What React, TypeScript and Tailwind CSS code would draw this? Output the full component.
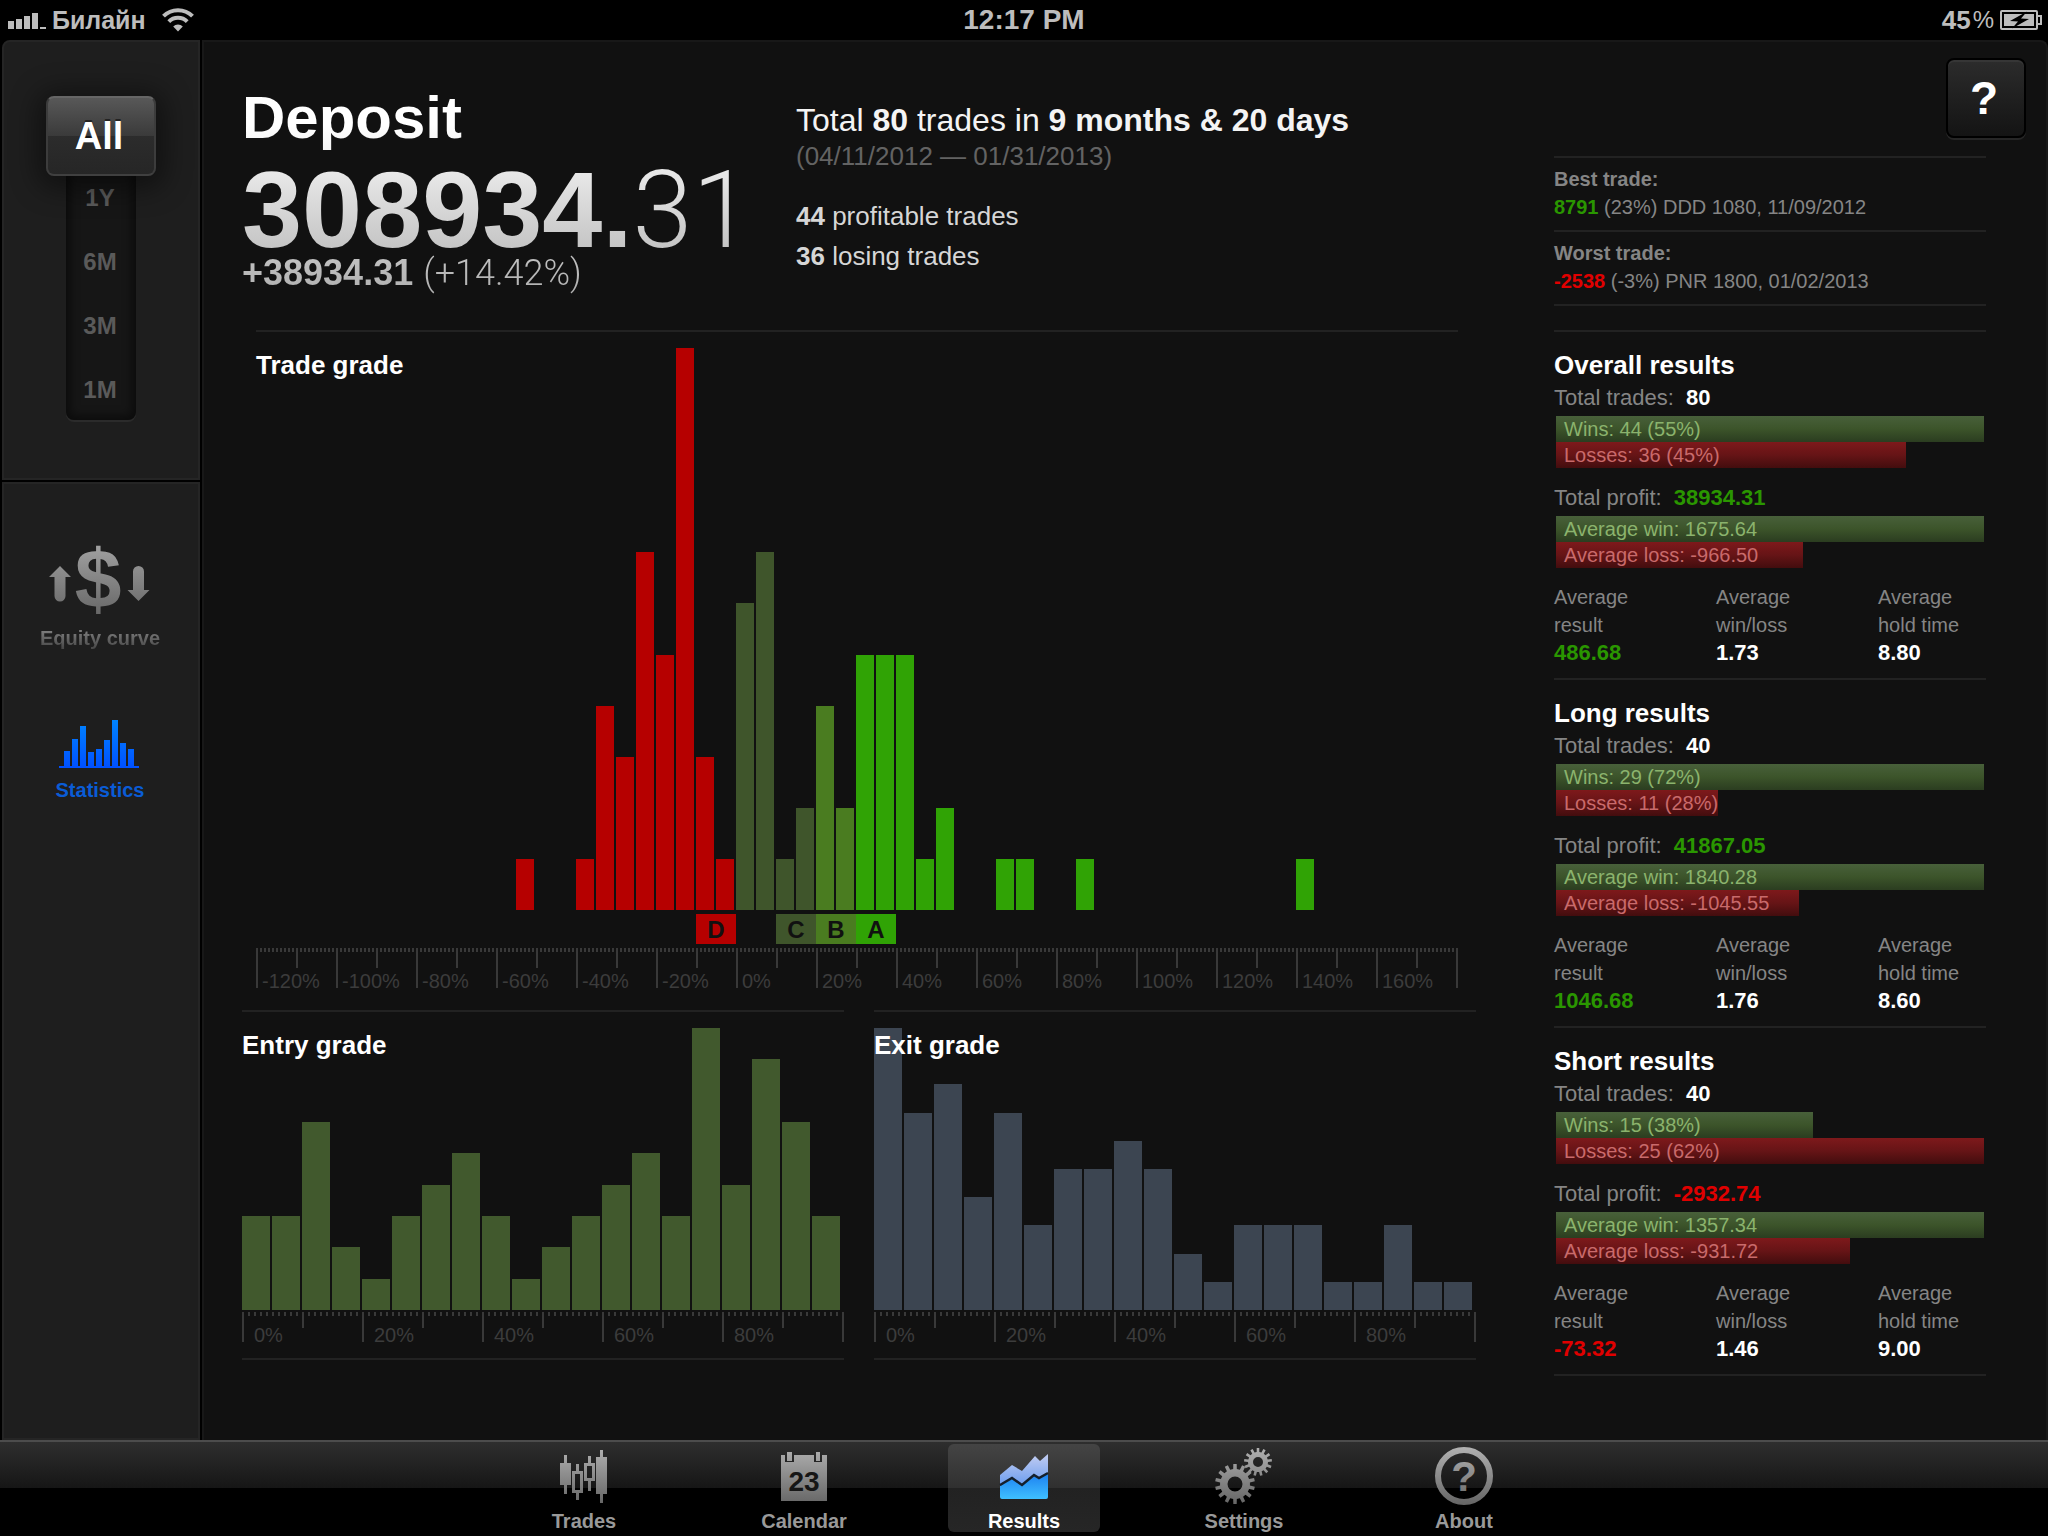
import React from "react";

type Grade = "D" | "C" | "B" | "A";

const TRADE_BINS = [
  0, 0, 0, 0, 0, 0, 0, 0, 0, 0, 0, 0, 0, 1, 0, 0, 1, 4, 3, 7, 5, 11, 3, 1, 6, 7, 1, 2, 4, 2, 5, 5, 5, 1, 2, 0, 0, 1,
  1, 0, 0, 1, 0, 0, 0, 0, 0, 0, 0, 0, 0, 0, 1, 0, 0, 0, 0, 0, 0, 0,
];
const TRADE_LABELS = [
  "-120%", "-100%", "-80%", "-60%", "-40%", "-20%", "0%", "20%", "40%", "60%", "80%", "100%", "120%", "140%", "160%",
];
const ENTRY_BINS = [3, 3, 6, 2, 1, 3, 4, 5, 3, 1, 2, 3, 4, 5, 3, 9, 4, 8, 6, 3];
const EXIT_BINS = [10, 7, 8, 4, 7, 3, 5, 5, 6, 5, 2, 1, 3, 3, 3, 1, 1, 3, 1, 1];
const SHORT_LABELS = ["0%", "20%", "40%", "60%", "80%"];

const GRADE_COLOR: Record<Grade, string> = {
  D: "bg-[#b60000]",
  C: "bg-[#3f552b]",
  B: "bg-[#4a7c20]",
  A: "bg-[#30a305]",
};

function tradeColor(bin: number): string {
  if (bin < 24) return GRADE_COLOR.D;
  if (bin < 28) return GRADE_COLOR.C;
  if (bin < 30) return GRADE_COLOR.B;
  return GRADE_COLOR.A;
}

const GRADES: { grade: Grade; place: string }[] = [
  { grade: "D", place: "col-start-23" },
  { grade: "C", place: "col-start-27" },
  { grade: "B", place: "col-start-29" },
  { grade: "A", place: "col-start-31" },
];

function Bars({ bins, color, height }: { bins: number[]; color: (i: number) => string; height: string }) {
  const max = Math.max(...bins);
  return (
    <div className={`flex items-end pr-[2px] ${height}`}>
      {bins.map((n, i) => (
        <div key={i} className="flex h-full flex-1 items-end pr-[2px]">
          <div className={`w-full ${color(i)}`} style={{ height: `${(n / max) * 100}%` }} />
        </div>
      ))}
    </div>
  );
}

function Axis({ labels, large }: { labels: string[]; large?: boolean }) {
  const height = large ? "h-10" : "h-[30px]";
  return (
    <div className="flex text-[20px] leading-5 text-[#3c3c3c]">
      {labels.map((l) => (
        <div
          key={l}
          className={`min-w-0 flex-1 border-l-2 border-[#393939] bg-[linear-gradient(90deg,#393939_2px,transparent_2px)] bg-[length:5%_4px] bg-repeat-x bg-origin-border ${height}`}
        >
          <div className={`mx-auto w-[2px] bg-[#393939] ${large ? "h-5" : "h-4"}`} />
          <div className={large ? "mt-[3px] pl-1" : "-mt-[3px] pl-[10px]"}>{l}</div>
        </div>
      ))}
      <div className={`w-[2px] bg-[#393939] ${height}`} />
    </div>
  );
}

function ChartTitle({ children }: { children: string }) {
  return <h2 className="absolute top-[18px] left-0 text-[26px] leading-[30px] font-bold text-white">{children}</h2>;
}

function SmallChart({ title, bins, color }: { title: string; bins: number[]; color: string }) {
  return (
    <section className="border-y-2 border-[#222] pb-4">
      <div className="relative pt-4">
        <Bars bins={bins} color={() => color} height="h-[282px]" />
        <ChartTitle>{title}</ChartTitle>
      </div>
      <div className="mt-[2px]">
        <Axis labels={SHORT_LABELS} />
      </div>
    </section>
  );
}

type Side = "win" | "loss";

function Meter({ side, text, value, max }: { side: Side; text: string; value: number; max: number }) {
  const look =
    side === "win"
      ? "bg-linear-to-b from-[#48603a] via-[#3c542a] to-[#2b3d20] text-[#8bb36d]"
      : "bg-linear-to-b from-[#7e191b] via-[#661416] to-[#430d0e] text-[#c96a6b]";
  return (
    <div
      className={`h-[26px] pl-2 text-[20px] leading-[26px] whitespace-nowrap ${look}`}
      style={{ width: `${(value / max) * 100}%` }}
    >
      {text}
    </div>
  );
}

interface ResultData {
  title: string;
  trades: number;
  wins: number;
  winsPct: string;
  losses: number;
  lossesPct: string;
  profit: string;
  avgWin: string;
  avgLoss: string;
  avgResult: string;
  ratio: string;
  hold: string;
}

const RESULTS: ResultData[] = [
  {
    title: "Overall results", trades: 80, wins: 44, winsPct: "55%", losses: 36, lossesPct: "45%", profit: "38934.31",
    avgWin: "1675.64", avgLoss: "966.50", avgResult: "486.68", ratio: "1.73", hold: "8.80",
  },
  {
    title: "Long results", trades: 40, wins: 29, winsPct: "72%", losses: 11, lossesPct: "28%", profit: "41867.05",
    avgWin: "1840.28", avgLoss: "1045.55", avgResult: "1046.68", ratio: "1.76", hold: "8.60",
  },
  {
    title: "Short results", trades: 40, wins: 15, winsPct: "38%", losses: 25, lossesPct: "62%", profit: "-2932.74",
    avgWin: "1357.34", avgLoss: "931.72", avgResult: "-73.32", ratio: "1.46", hold: "9.00",
  },
];

const signColor = (v: string) => (v.startsWith("-") ? "text-[#e00000]" : "text-[#2a9600]");

function Average({ label, value, color }: { label: string; value: string; color: string }) {
  return (
    <div>
      <div className="text-[20px] leading-7">
        Average
        <br />
        {label}
      </div>
      <div className={`text-[22px] leading-7 font-bold ${color}`}>{value}</div>
    </div>
  );
}

function Results({ r }: { r: ResultData }) {
  const max = Math.max(r.wins, r.losses);
  const maxAvg = Math.max(Number(r.avgWin), Number(r.avgLoss));
  return (
    <section className="border-t-2 border-[#222] pt-[18px] pb-[11px] text-[#858585] last:border-b-2">
      <h2 className="text-[26px] leading-[30px] font-bold text-white">{r.title}</h2>
      <p className="text-[22px] leading-9">
        Total trades: <b className="ml-[6px] text-white">{r.trades}</b>
      </p>
      <div className="mx-[2px]">
        <Meter side="win" text={`Wins: ${r.wins} (${r.winsPct})`} value={r.wins} max={max} />
        <Meter side="loss" text={`Losses: ${r.losses} (${r.lossesPct})`} value={r.losses} max={max} />
      </div>
      <p className="mt-3 text-[22px] leading-9">
        Total profit: <b className={`ml-[6px] ${signColor(r.profit)}`}>{r.profit}</b>
      </p>
      <div className="mx-[2px]">
        <Meter side="win" text={`Average win: ${r.avgWin}`} value={Number(r.avgWin)} max={maxAvg} />
        <Meter side="loss" text={`Average loss: -${r.avgLoss}`} value={Number(r.avgLoss)} max={maxAvg} />
      </div>
      <div className="mt-[15px] grid grid-cols-[3fr_3fr_2fr]">
        <Average label="result" value={r.avgResult} color={signColor(r.avgResult)} />
        <Average label="win/loss" value={r.ratio} color="text-white" />
        <Average label="hold time" value={r.hold} color="text-white" />
      </div>
    </section>
  );
}

function TradeNote({ label, amount, rest }: { label: string; amount: string; rest: string }) {
  return (
    <div className="border-t-2 border-[#222] pt-[7px] pb-[9px] text-[20px] leading-7 text-[#858585] last:border-b-2">
      <div className="font-bold">{label}</div>
      <div>
        <b className={signColor(amount)}>{amount}</b> {rest}
      </div>
    </div>
  );
}

function StatusBar() {
  return (
    <header className="grid h-10 grid-cols-3 items-center bg-black px-[6px] text-[26px] leading-8 font-bold text-[#bdbdbd]">
      <div className="flex items-center">
        <svg className="ml-[2px]" width="38" height="18" fill="#bdbdbd" aria-hidden="true">
          <rect x="0" y="10" width="6" height="8" />
          <rect x="8" y="8" width="6" height="10" />
          <rect x="16" y="5" width="6" height="13" />
          <rect x="24" y="2" width="6" height="16" />
          <rect x="32" y="16" width="6" height="2" />
        </svg>
        <span className="ml-[6px] text-[25px]">Билайн</span>
        <svg className="ml-4" width="32" height="24" viewBox="0 0 32 24" fill="none" stroke="#bdbdbd" aria-hidden="true">
          <path d="M1.5 8.2 A20.5 20.5 0 0 1 30.5 8.2" strokeWidth="4" />
          <path d="M6.8 13.6 A13 13 0 0 1 25.2 13.6" strokeWidth="4" />
          <path d="M16 23.5 L11.2 18.6 A6.8 6.8 0 0 1 20.8 18.6 Z" fill="#bdbdbd" stroke="none" />
        </svg>
      </div>
      <div className="text-center text-[28px]">12:17 PM</div>
      <div className="flex items-center justify-end">
        <span>45</span>
        <span className="ml-[2px] text-[24px] font-normal">%</span>
        <svg className="ml-[6px]" width="42" height="20" viewBox="0 0 42 20" aria-hidden="true">
          <rect x="1" y="1" width="36" height="18" rx="1" fill="none" stroke="#bdbdbd" strokeWidth="2" />
          <rect x="4" y="4" width="30" height="12" fill="#bdbdbd" />
          <path d="M38 6 h3 v8 h-3" fill="none" stroke="#bdbdbd" strokeWidth="2" />
          <path d="M27 1.5 L10 11 L18 11.5 L12 18.5 L29 9 L21 8.5 Z" fill="#000" />
        </svg>
      </div>
    </header>
  );
}

function Sidebar() {
  return (
    <aside className="flex w-[202px] shrink-0 flex-col gap-[2px] bg-black px-[2px]">
      <div className="flex flex-col items-center rounded-tl-lg border-2 border-[#252525] bg-[#1e1e1e] pt-[54px] pb-[58px] font-bold">
        <button
          type="button"
          aria-pressed="true"
          className="relative z-10 h-20 w-[110px] rounded-lg border-2 border-t-[#666] border-r-[#3c3c3c] border-b-[#404040] border-l-[#3c3c3c] bg-[linear-gradient(#585858,#3a3a3a_50%,#2c2c2c_50%,#262626)] pr-1 text-[38px] leading-10 text-white shadow-[0_4px_28px_8px_rgba(0,0,0,0.45)] [text-shadow:0_-2px_0_rgba(0,0,0,0.5)]"
        >
          All
        </button>
        <div className="-mt-2 flex w-[70px] flex-col gap-4 rounded-b-lg bg-[#161616] pt-[6px] pr-[2px] pb-[6px] text-[24px] text-[#5a5a5a] shadow-[inset_0_0_10px_4px_rgba(0,0,0,0.5),0_2px_0_#2b2b2b]">
          {["1Y", "6M", "3M", "1M"].map((p) => (
            <button key={p} type="button" className="h-12">
              {p}
            </button>
          ))}
        </div>
      </div>
      <nav className="flex flex-1 flex-col items-center gap-[70px] border-2 border-[#252525] bg-[#1e1e1e] pt-[60px] pr-[2px] text-[20px] leading-6 font-bold">
        <button type="button" className="flex flex-col items-center gap-[10px]">
          <svg className="overflow-visible" width="104" height="72" viewBox="0 0 104 72" aria-hidden="true">
            <defs>
              <linearGradient id="equity" gradientUnits="userSpaceOnUse" x1="0" y1="0" x2="0" y2="72">
                <stop offset="0" stopColor="#a2a2a2" />
                <stop offset="1" stopColor="#666" />
              </linearGradient>
            </defs>
            <g fill="url(#equity)">
              <path d="M12 22 L23 33 H17.500 V52 a5.500 5.500 0 0 1 -11 0 V33 H1 Z" />
              <path d="M90.500 57 L79.500 46 H85 V27.500 a5.500 5.500 0 0 1 11 0 V46 H101.500 Z" />
              <text x="50" y="64" textAnchor="middle" fontSize="84" fontWeight="700">
                $
              </text>
            </g>
          </svg>
          <span className="bg-linear-to-b from-[#8c8c8c] to-[#444] bg-clip-text text-transparent">Equity curve</span>
        </button>
        <button type="button" aria-current="page" className="flex flex-col items-center gap-[10px]">
          <svg className="overflow-visible" width="80" height="48" viewBox="1 0 80 48" aria-hidden="true">
            <defs>
              <linearGradient id="stats" gradientUnits="userSpaceOnUse" x1="0" y1="0" x2="0" y2="48">
                <stop offset="0" stopColor="#0084ff" />
                <stop offset="1" stopColor="#0050ff" />
              </linearGradient>
            </defs>
            <g fill="url(#stats)">
              {[31, 19, 6, 32, 29, 20, 0, 23, 29].map((y, i) => (
                <rect key={i} x={5 + i * 8} y={y} width="6" height={46 - y} />
              ))}
              <rect x="0" y="46" width="80" height="2" />
            </g>
          </svg>
          <span className="text-[#0a5cd6]">Statistics</span>
        </button>
      </nav>
    </aside>
  );
}

function gearPath(cx: number, cy: number, outer: number, inner: number, hole: number, teeth: number): string {
  const pts: string[] = [];
  const step = (Math.PI * 2) / teeth;
  for (let i = 0; i < teeth; i++) {
    const a = i * step - Math.PI / 2;
    const corners: [number, number][] = [
      [inner, -0.27],
      [outer, -0.19],
      [outer, 0.19],
      [inner, 0.27],
    ];
    for (const [r, o] of corners) {
      pts.push(`${(cx + r * Math.cos(a + o * step)).toFixed(2)} ${(cy + r * Math.sin(a + o * step)).toFixed(2)}`);
    }
  }
  return `M${pts.join("L")}Z M${cx - hole} ${cy}a${hole} ${hole} 0 1 0 ${hole * 2} 0a${hole} ${hole} 0 1 0 ${-hole * 2} 0Z`;
}

const TABS: { name: string; icon: React.ReactNode; active?: boolean }[] = [
  {
    name: "Trades",
    icon: (
      <>
        <path d="M12 11h3v8h4v22h-4v9h-3v-9H8V19h4z" />
        <path fillRule="evenodd" d="M24 20h3v7h4v22h-4v7h-3v-7h-4V27h4zM23 30v16h5V30z" />
        <path fillRule="evenodd" d="M36 12h3v7h4v18h-4v10h-3V37h-4V19h4zM35 22v12h5V22z" />
        <path d="M48 6h3v7h4v37h-4v9h-3v-9h-4V13h4z" />
      </>
    ),
  },
  {
    name: "Calendar",
    icon: (
      <>
        <path d="M9 11h4v7h9v-7h20v7h8v-7h5v46H9z" />
        <path d="M15 8h5v9h-5zM44 8h4v9h-4z" />
        <text x="32" y="47" textAnchor="middle" fontSize="28" fontWeight="700" fill="#161616">
          23
        </text>
      </>
    ),
  },
  {
    name: "Results",
    active: true,
    icon: (
      <>
        <path d="M8 31L20 21L30 27L43 12L48 17L56 10V40H8z" fill="url(#area-back)" />
        <path d="M8 42L20 35L30 41L43 32L48 34L56 29V53a2 2 0 0 1-2 2H10a2 2 0 0 1-2-2z" fill="url(#area-front)" />
        <path d="M8 41L20 34L30 41L42 31L47 34L56 29" fill="none" stroke="#14202c" strokeWidth="2.500" />
      </>
    ),
  },
  {
    name: "Settings",
    icon: (
      <>
        <path fillRule="evenodd" d={gearPath(23, 40, 20, 15, 7.5, 14)} />
        <path fillRule="evenodd" d={gearPath(46, 18, 14, 10, 5, 13)} />
      </>
    ),
  },
  {
    name: "About",
    icon: (
      <>
        <circle cx="32" cy="32" r="26" fill="none" stroke="url(#tab-metal)" strokeWidth="6" />
        <text x="32" y="47" textAnchor="middle" fontSize="42" fontWeight="700">
          ?
        </text>
      </>
    ),
  },
];

function TabBar() {
  return (
    <nav className="flex h-24 justify-center gap-[68px] border-t-2 border-[#4c4c4c] bg-[linear-gradient(#2e2e2e,#161616_46px,#000_46px)] pt-[2px] text-[20px] leading-[26px] font-bold">
      <svg className="absolute h-0 w-0" aria-hidden="true">
        <defs>
          <linearGradient id="tab-metal" gradientUnits="userSpaceOnUse" x1="0" y1="4" x2="0" y2="60">
            <stop offset="0" stopColor="#b0b0b0" />
            <stop offset="1" stopColor="#666" />
          </linearGradient>
          <linearGradient id="area-back" x1="0" y1="0" x2="0" y2="1">
            <stop offset="0" stopColor="#c3cdf2" />
            <stop offset="1" stopColor="#6f9fee" />
          </linearGradient>
          <linearGradient id="area-front" x1="0" y1="0" x2="0" y2="1">
            <stop offset="0" stopColor="#1c7ff0" />
            <stop offset="1" stopColor="#3fc0ff" />
          </linearGradient>
        </defs>
      </svg>
      {TABS.map((t) => (
        <button
          key={t.name}
          type="button"
          aria-current={t.active ? "page" : undefined}
          className={`flex h-[88px] w-[152px] flex-col items-center ${
            t.active
              ? "rounded-md bg-[linear-gradient(#444,#303030_44px,#222_44px,#262626)] text-white"
              : "text-[#999]"
          }`}
        >
          <svg className="shrink-0" width="64" height="64" viewBox="0 0 64 64" fill="url(#tab-metal)" aria-hidden="true">
            {t.icon}
          </svg>
          <span>{t.name}</span>
        </button>
      ))}
    </nav>
  );
}

export default function App() {
  return (
    <div className="flex min-h-screen flex-col bg-black font-['Liberation_Sans',Arial,sans-serif]">
      <StatusBar />
      <div className="flex flex-1">
        <Sidebar />
        <main className="flex flex-1 items-start rounded-tr-lg border-2 border-b-0 border-[#181818] bg-[#111] pr-[60px] pl-[38px]">
          <div className="min-w-0 flex-1">
            <div className="flex pt-10 pb-9">
              <div className="w-[554px] shrink-0 bg-linear-to-b from-white from-20% to-[#b0b0b0] bg-clip-text pb-1 font-bold whitespace-nowrap text-transparent">
                <h1 className="text-[60px] leading-[72px]">Deposit</h1>
                <div className="mt-[10px] text-[108px] leading-[92px]">
                  308934.<span className="font-['Roboto'] font-light">31</span>
                </div>
                <div className="text-[36px] leading-[34px]">
                  +38934.31 <span className="font-['Roboto'] font-light">(+14.42%)</span>
                </div>
              </div>
              <div className="pt-[18px] text-[26px] leading-10 text-[#d6d6d6]">
                <p className="text-[32px] text-[#f4f4f4]">
                  Total <b>80</b> trades in <b>9 months &amp; 20 days</b>
                </p>
                <p className="leading-8 text-[#636363]">(04/11/2012 — 01/31/2013)</p>
                <p className="mt-6">
                  <b>44</b> profitable trades
                </p>
                <p>
                  <b>36</b> losing trades
                </p>
              </div>
            </div>

            <section className="mr-[18px] ml-[14px] border-t-2 border-[#222]">
              <div className="relative pt-4">
                <Bars bins={TRADE_BINS} color={tradeColor} height="h-[562px]" />
                <ChartTitle>Trade grade</ChartTitle>
              </div>
              <div className="mt-1 mb-1 grid grid-cols-[repeat(60,minmax(0,1fr))] pr-[2px]">
                {GRADES.map((g) => (
                  <div
                    key={g.grade}
                    className={`col-span-2 h-[30px] text-center text-[24px] leading-8 font-bold text-[#111] ${g.place} ${GRADE_COLOR[g.grade]}`}
                  >
                    {g.grade}
                  </div>
                ))}
              </div>
              <Axis labels={TRADE_LABELS} large />
            </section>

            <div className="mt-[22px] grid grid-cols-2 gap-[30px]">
              <SmallChart title="Entry grade" bins={ENTRY_BINS} color="bg-[#41592d]" />
              <SmallChart title="Exit grade" bins={EXIT_BINS} color="bg-[#3c4551]" />
            </div>
          </div>

          <aside className="ml-[78px] flex w-[432px] shrink-0 flex-col pt-4">
            <button
              type="button"
              aria-label="Help"
              className="-mr-10 mb-[18px] h-20 w-20 self-end rounded-lg border-2 border-black bg-linear-to-b from-[#2c2c2c] to-[#141414] pr-1 text-[46px] leading-none font-bold text-white shadow-[0_2px_0_#262626,inset_0_2px_0_#363636]"
            >
              ?
            </button>
            <div className="mb-6">
              <TradeNote label="Best trade:" amount="8791" rest="(23%) DDD 1080, 11/09/2012" />
              <TradeNote label="Worst trade:" amount="-2538" rest="(-3%) PNR 1800, 01/02/2013" />
            </div>
            <div>
              {RESULTS.map((r) => (
                <Results key={r.title} r={r} />
              ))}
            </div>
          </aside>
        </main>
      </div>
      <TabBar />
    </div>
  );
}
